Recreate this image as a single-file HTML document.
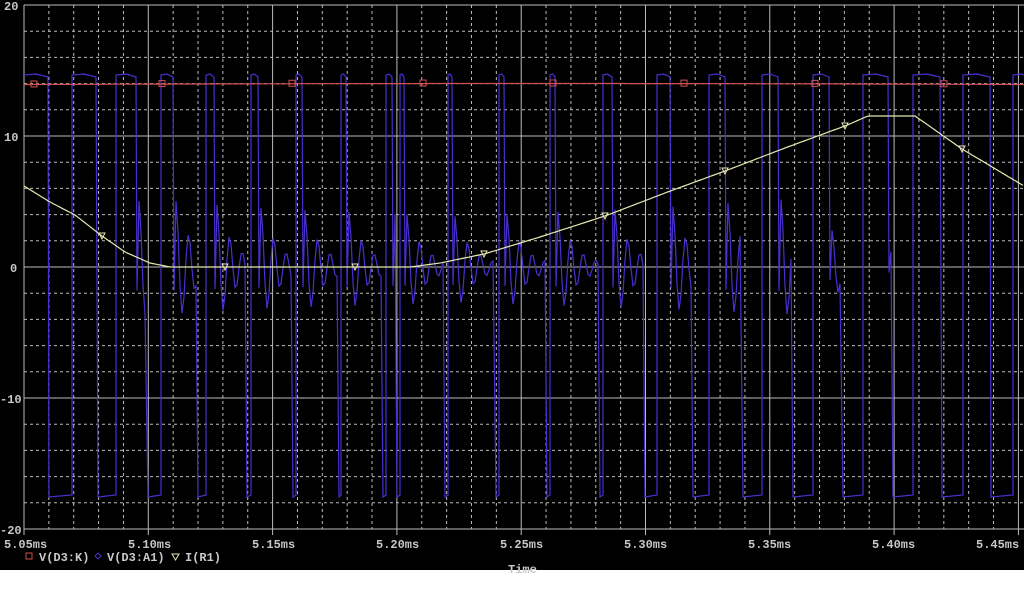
<!DOCTYPE html>
<html><head><meta charset="utf-8"><style>
html,body{margin:0;padding:0;background:#fff;}
#w{position:relative;width:1024px;height:609px;overflow:hidden;background:#fff;}
svg{position:absolute;left:0;top:0;}
text{font-family:"Liberation Mono",monospace;font-size:12px;fill:#c8c8c8;font-weight:bold;}
</style></head><body><div id="w">
<svg id="s" width="1024" height="609" xmlns="http://www.w3.org/2000/svg">
<rect x="0" y="0" width="1024" height="570" fill="#000"/>
<g id="grid"></g>
<path id="blue" fill="none" stroke="#4a2fd0" stroke-width="1.2"/>
<path id="red" fill="none" stroke="#d05050" stroke-width="1.2"/>
<path id="yel" fill="none" stroke="#e8e8b0" stroke-width="1.2"/>
<g id="mk"></g>
<text x="4" y="10">20</text>
<text x="4" y="141">10</text>
<text x="10" y="272">0</text>
<text x="0" y="403">-10</text>
<text x="0" y="534">-20</text>
<text x="4" y="548">5.05ms</text>
<text x="128" y="548">5.10ms</text>
<text x="252" y="548">5.15ms</text>
<text x="376" y="548">5.20ms</text>
<text x="500" y="548">5.25ms</text>
<text x="624" y="548">5.30ms</text>
<text x="748" y="548">5.35ms</text>
<text x="872" y="548">5.40ms</text>
<text x="976" y="548">5.45ms</text>
<rect x="26" y="553" width="6" height="6" fill="none" stroke="#d05050"/>
<text x="39" y="561">V(D3:K)</text>
<path d="M98 553l3 3-3 3-3-3z" fill="none" stroke="#4a2fd0"/>
<text x="107" y="561">V(D3:A1)</text>
<path d="M172 554h7l-3.5 6z" fill="none" stroke="#e8e8b0"/>
<text x="185" y="561">I(R1)</text>
<text x="508" y="573">Time</text>
</svg></div>
<script>
var g=document.getElementById('grid'),h='';
var X0=24,XS=124.3,Y0=5,YS=13.1;
for(var v=20;v>=-20;v-=2){var y=Y0+(20-v)*YS;var maj=(v%10==0);
h+='<line x1="24" x2="1024" y1="'+y+'" y2="'+y+'" stroke="#bbb" stroke-width="1" '+(maj?'':'stroke-dasharray="3,3"')+'/>';}
for(var k=0;k<=42;k++){var x=X0+k*XS/5;if(x>1024)break;var maj=(k%5==0);
h+='<line y1="5" y2="'+(maj?535:529)+'" x1="'+x+'" x2="'+x+'" stroke="#bbb" stroke-width="1" '+(maj?'':'stroke-dasharray="3,3"')+'/>';}
g.innerHTML=h;
function lerp(a,x){for(var i=0;i<a.length-1;i++){if(x<=a[i+1][0]){var t=(x-a[i][0])/(a[i+1][0]-a[i][0]);return a[i][1]+t*(a[i+1][1]-a[i][1]);}}return a[a.length-1][1];}
var C=[[24,48,49,72],[72,96,98,116],[116,136,148,161],[161,173,198,206],[206,214,247,251],[251,258,293,296],[296,302,339,341],[341,346,383,386],[386,392,397,400],[400,404,445,448],[448,452,496,499],[499,504,547,550],[550,555,600,603],[603,612,645,657],[657,670,693,709],[709,725,743,762],[762,778,793,813],[813,829,843,863],[863,888,893,913],[913,940,942,963],[963,990,991,1013],[1013,1030,1040,1050]];
var AMP=[[0,60],[150,80],[250,70],[450,60],[650,70],[780,80],[860,20],[1024,10]];
var HI=74,LO=497,ZE=267,d='';
for(var k=0;k<C.length;k++){var c=C[k],hs=c[0],he=c[1],ls=c[2],le=c[3];
d+=(k==0?'M':' L')+hs+' '+(HI+1)+' L'+((hs+he)/2)+' '+HI+' L'+he+' '+(HI+3);
var gap=ls-he;
if(gap>4){var a=lerp(AMP,he);d+=' L'+(he+1)+' '+(ZE+a*0.3);
for(var x=he+3;x<ls-1;x+=2){var t=x-he;d+=' L'+x+' '+(ZE-a*Math.exp(-t/18)*Math.sin(t*0.5)).toFixed(1);}}
d+=' L'+ls+' '+LO+' L'+le+' '+(LO-2);}
document.getElementById('blue').setAttribute('d',d);
var r='M24 85';for(var x=24;x<=1024;x+=8){r+=' L'+x+' '+(84.5-Math.sin((x-24)/320)*1.0).toFixed(1);}
document.getElementById('red').setAttribute('d',r);
var Y=[[24,186],[50,202],[75,215],[102,236],[125,252],[150,263],[170,267],[410,267],[440,263],[484,254],[540,237],[605,216],[665,193],[725,171],[785,148],[845,126],[868,116],[915,116],[962,149],[1024,186]];
var p='M24 186';for(var x=24;x<=1024;x+=3)p+=' L'+x+' '+lerp(Y,x).toFixed(1);
document.getElementById('yel').setAttribute('d',p);
var m='';[34,162,292,423,553,684,815,944].forEach(function(x){m+='<rect x="'+(x-3)+'" y="'+(81-Math.sin((x-24)/320))+'" width="6" height="6" fill="none" stroke="#d05050"/>';});
[102,225,355,484,605,725,845,962].forEach(function(x){var y=lerp(Y,x);m+='<path d="M'+(x-3)+' '+(y-3)+'h6l-3 6z" fill="none" stroke="#e8e8b0"/>';});
document.getElementById('mk').innerHTML=m;
</script>
</body></html>
